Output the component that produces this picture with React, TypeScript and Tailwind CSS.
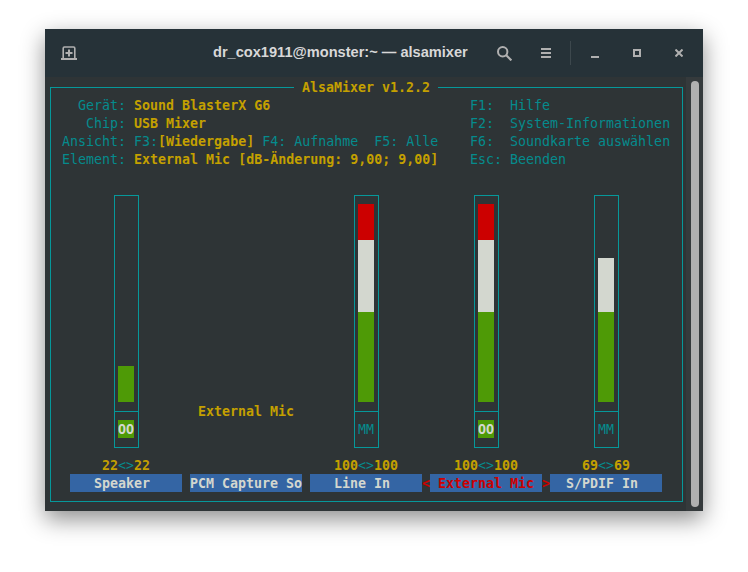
const mono = "font-['DejaVu_Sans_Mono','Liberation_Mono',monospace] text-[13.3px] leading-[20px] h-[18px] whitespace-pre"

interface Channel {
  name: string
  red?: number
  white?: number
  green?: number
  toggle?: "OO" | "MM"
  left?: number
  right?: number
  selected?: boolean
}

const channels: Channel[] = [
  { name: "   Speaker", green: 36, toggle: "OO", left: 22, right: 22 },
  { name: "PCM Capture So" },
  { name: "   Line In", red: 36, white: 72, green: 90, toggle: "MM", left: 100, right: 100 },
  { name: " External Mic", red: 36, white: 72, green: 90, toggle: "OO", left: 100, right: 100, selected: true },
  { name: "  S/PDIF In", white: 54, green: 90, toggle: "MM", left: 69, right: 69 },
]

const Y = ({ children }: { children: React.ReactNode }) => (
  <span className="font-bold text-[#c4a000]">{children}</span>
)

const ChannelStrip = ({ channel }: { channel: Channel }) => {
  const isControl = channel.toggle !== undefined
  return (
    <div className="flex w-[112px] flex-col">
      {isControl ? (
        <div className="ml-[44px] flex h-[253px] w-[25px] flex-col border border-[#06989a]">
          <div className="flex h-[215px] flex-col justify-end pb-[9px] pl-[3px] pr-[4px]">
            {channel.red && <div style={{ height: channel.red }} className="bg-[#cc0000]" />}
            {channel.white && <div style={{ height: channel.white }} className="bg-[#d3d7cf]" />}
            {channel.green && <div style={{ height: channel.green }} className="bg-[#4e9a06]" />}
          </div>
          <div className="flex-1 border-t border-[#06989a] pl-[3px] pr-[4px] pt-[8px]">
            {channel.toggle === "OO" ? (
              <div className={`${mono} bg-[#4e9a06] text-center font-bold text-[#d3d7cf]`}>OO</div>
            ) : (
              <div className={`${mono} text-center text-[#058b8d]`}>MM</div>
            )}
          </div>
        </div>
      ) : (
        <div className="flex h-[253px] items-end justify-center pb-[28px]">
          <div className={mono}>
            <Y>External Mic</Y>
          </div>
        </div>
      )}
      <div className={`${mono} mt-2 text-center`}>
        {isControl && (
          <>
            <Y>{channel.left}</Y>
            <span className="text-[#058b8d]">&lt;&gt;</span>
            <Y>{channel.right}</Y>
          </>
        )}
      </div>
      <div
        className={`${mono} relative bg-[#3465a4] font-bold ${channel.selected ? "text-[#cc0000]" : "text-[#d3d7cf]"}`}
      >
        {channel.name}
        {channel.selected && (
          <>
            <span className="absolute left-[-8px] top-0">&lt;</span>
            <span className="absolute right-[-8px] top-0">&gt;</span>
          </>
        )}
      </div>
    </div>
  )
}

const TitleBar = () => (
  <div className="flex h-[48px] items-center bg-[#263238] text-[#b0b0b0]">
    <div className="flex w-[48px] justify-center">
      <svg width="16" height="14" viewBox="0 0 16 14" fill="none" stroke="currentColor" strokeWidth="1.6">
        <path d="M2.2 12.5V2.2Q2.2 1 3.4 1h9.2q1.2 0 1.2 1.2V12.5" />
        <path d="M0 13h16" strokeWidth="2" />
        <path d="M8 3.5v7M4.5 7h7" strokeWidth="2" />
      </svg>
    </div>
    <div className="flex-1 pl-[120px] font-['Liberation_Sans',sans-serif] text-[14.6px] font-bold text-[#d8d8d8]">
      dr_cox1911@monster:~ — alsamixer
    </div>
    <svg width="15" height="15" viewBox="0 0 15 15" fill="none" stroke="currentColor" strokeWidth="2" className="mr-[29px]">
      <circle cx="5.7" cy="5.7" r="4.7" />
      <path d="M9 9l5.4 5.4" strokeWidth="2.2" />
    </svg>
    <div className="mr-[19px] flex w-[10px] flex-col gap-[2px]">
      <div className="h-[2px] bg-current" />
      <div className="h-[2px] bg-current" />
      <div className="h-[2px] bg-current" />
    </div>
    <div className="h-[24px] w-px bg-[#3d484d]" />
    <div className="ml-[20px] mt-[8px] h-[2px] w-[8px] bg-current" />
    <div className="ml-[34px] h-[8px] w-[8px] border-2 border-current" />
    <svg width="8" height="8" viewBox="0 0 8 8" stroke="currentColor" strokeWidth="2" className="ml-[34px] mr-[20px]">
      <path d="M.5 .5l7 7M7.5 .5l-7 7" />
    </svg>
  </div>
)

export default function App() {
  return (
    <div className="h-[572px] w-[748px] overflow-hidden bg-white pl-[45px] pt-[29px]">
      <div className="flex h-[482px] w-[658px] flex-col bg-[#2e3436] shadow-[0_8px_22px_rgba(0,0,0,0.45)]">
        <TitleBar />
        <div className="flex flex-1">
          <div className="flex-1 pl-[5px] pr-[3px] pt-[10px]">
            <div className="relative h-[415px] border border-[#06989a] pl-[19px]">
              <div className={`${mono} absolute left-[243px] top-[-10px] bg-[#2e3436] px-2`}>
                <Y>AlsaMixer v1.2.2</Y>
              </div>
              <div className="ml-[-24px] mt-2 h-[72px] text-[#058b8d]">
                <div className="flex">
                  <div className="w-[424px]">
                    <div className={mono}>
                      {"    Gerät: "}
                      <Y>Sound BlasterX G6</Y>
                    </div>
                    <div className={mono}>
                      {"     Chip: "}
                      <Y>USB Mixer</Y>
                    </div>
                    <div className={mono}>
                      {"  Ansicht: F3:"}
                      <Y>[Wiedergabe]</Y>
                      {" F4: Aufnahme  F5: Alle"}
                    </div>
                    <div className={mono}>
                      {"  Element: "}
                      <Y>External Mic [dB-Änderung: 9,00; 9,00]</Y>
                    </div>
                  </div>
                  <div>
                    <div className={mono}>F1:  Hilfe</div>
                    <div className={mono}>F2:  System-Informationen</div>
                    <div className={mono}>F6:  Soundkarte auswählen</div>
                    <div className={mono}>Esc: Beenden</div>
                  </div>
                </div>
              </div>
              <div className="mt-[27px] flex gap-2">
                {channels.map((channel) => (
                  <ChannelStrip key={channel.name} channel={channel} />
                ))}
              </div>
            </div>
          </div>
          <div className="flex w-[17px] justify-center bg-[#353a3c] pb-[4px] pt-[4px] pl-[1px]">
            <div className="w-[8px] rounded-full bg-[#b0b0b0]" />
          </div>
        </div>
      </div>
    </div>
  )
}
